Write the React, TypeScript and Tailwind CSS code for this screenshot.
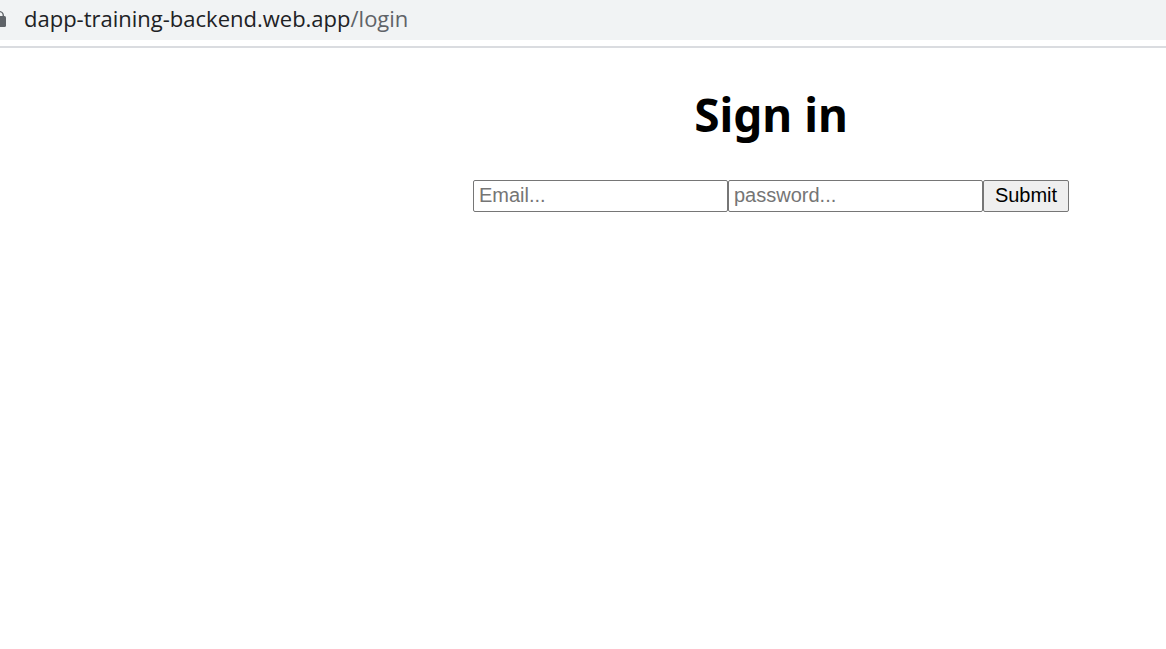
function LockIcon() {
  return (
    <svg className="h-5 w-2 shrink-0" viewBox="0 0 8 20" aria-hidden="true">
      <path d="M-6 8H4.500Q6 8 6 9.500V17.500Q6 19 4.500 19H-6Z" fill="#5f6368" />
      <path d="M-4.500 8.500V7.500a3.900 3.900 0 0 1 7.800 0v1" fill="none" stroke="#5f6368" strokeWidth="1.400" />
    </svg>
  );
}

export default function App() {
  return (
    <div className="min-h-screen bg-white text-black">
      <header className="border-b-2 border-[#dadce0] pb-1.5">
        <div className="flex h-10 items-center gap-4 bg-[#f1f3f4] pb-1 font-['Open_Sans',sans-serif] text-[22px]">
          <LockIcon />
          <p className="text-[#202124]">
            dapp-training-backend.web.app<span className="text-[#5f6368]">/login</span>
          </p>
        </div>
      </header>
      <main className="flex flex-col items-center gap-9 pt-9 pl-[376px]">
        <h1 className="font-['Noto_Sans',sans-serif] text-[46px] leading-15 font-bold">Sign in</h1>
        <form className="flex font-['Liberation_Sans',Arial,sans-serif] text-xl" onSubmit={(e) => e.preventDefault()}>
          <input
            type="email"
            aria-label="Email"
            placeholder="Email..."
            className="h-8 w-[255px] rounded-xs border border-[#767676] bg-white px-[5px] pb-0.5 placeholder:text-[#757575]"
          />
          <input
            type="password"
            aria-label="Password"
            placeholder="password..."
            className="h-8 w-[255px] rounded-xs border border-[#767676] bg-white px-[5px] pb-0.5 placeholder:text-[#757575]"
          />
          <button type="submit" className="h-8 w-[86px] rounded-xs border border-[#767676] bg-[#efefef] pb-0.5">
            Submit
          </button>
        </form>
      </main>
    </div>
  );
}
